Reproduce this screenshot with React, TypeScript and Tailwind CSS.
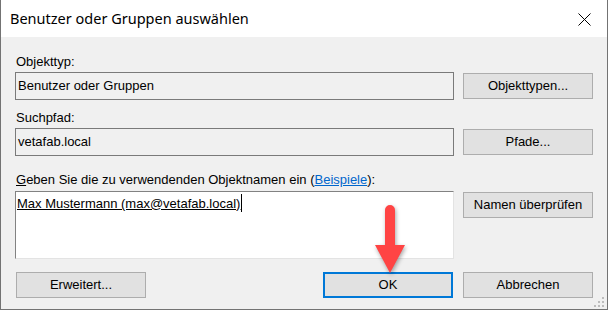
import React from 'react';

// Windows-Dialog "Benutzer oder Gruppen auswählen" mit rotem Hinweispfeil auf OK.
function WinButton({ children, primary = false }: { children: React.ReactNode; primary?: boolean }) {
  return (
    <div
      className={
        'flex h-[26px] w-[130px] shrink-0 items-center justify-center bg-[#e1e1e1] text-[13px] text-black ' +
        (primary ? 'border-2 border-[#0078d7]' : 'border border-[#adadad]')
      }
    >
      {children}
    </div>
  );
}

function Label({ children }: { children: React.ReactNode }) {
  return <div className="h-[15px] pl-px text-[13px] leading-[15px] text-black">{children}</div>;
}

function ReadOnlyBox({ value }: { value: string }) {
  return (
    <div className="flex h-[28px] w-[439px] items-center border border-[#7a7a7a] bg-[#f0f0f0] pl-[2px] text-[13px] text-black">
      {value}
    </div>
  );
}

function Arrow() {
  return (
    <svg
      className="pointer-events-none absolute left-[370px] top-[198px] drop-shadow-[1px_2px_2px_rgba(0,0,0,0.35)]"
      width="38"
      height="78"
      viewBox="0 0 38 78"
    >
      <path
        d="M14 12 a5 5 0 0 1 10 0 V47 H34 L19 75 L4 47 H14 Z"
        fill="#ff4444"
      />
    </svg>
  );
}

function ResizeGrip() {
  const dots = [
    [8, 0],
    [4, 4],
    [8, 4],
    [0, 8],
    [4, 8],
    [8, 8],
  ];
  return (
    <div className="absolute bottom-[2px] right-[3px] h-[10px] w-[10px]">
      {dots.map(([x, y]) => (
        <span
          key={`${x}-${y}`}
          className="absolute h-[2px] w-[2px] bg-[#bcbcbc]"
          style={{ left: x, top: y }}
        />
      ))}
    </div>
  );
}

export default function App() {
  return (
    <div className="h-[310px] w-[609px] bg-white" style={{ fontFamily: '"Liberation Sans", Arial, sans-serif' }}>
      <div className="relative flex h-[310px] w-[608px] flex-col border-x border-b border-[#737373]">
        {/* Titelleiste */}
        <div className="flex h-[37px] shrink-0 items-center justify-between bg-white pl-[9px] pr-[16px]">
          <span className="text-[14.5px] text-black" style={{ fontFamily: '"Noto Sans", "Liberation Sans", sans-serif' }}>
            Benutzer oder Gruppen auswählen
          </span>
          <svg width="13" height="13" viewBox="0 0 13 13" className="mt-[1px]">
            <path d="M0.5 0.5 L12.5 12.5 M12.5 0.5 L0.5 12.5" stroke="#000" strokeWidth="1" />
          </svg>
        </div>

        {/* Inhalt */}
        <div className="flex flex-1 flex-col bg-[#f0f0f0] pl-[14px] pt-[17px]">
          <Label>Objekttyp:</Label>
          <div className="mt-[3px] flex items-start gap-[9px]">
            <ReadOnlyBox value="Benutzer oder Gruppen" />
            <div className="mt-px">
              <WinButton>Objekttypen...</WinButton>
            </div>
          </div>

          <div className="mt-[10px]">
            <Label>Suchpfad:</Label>
          </div>
          <div className="mt-[3px] flex items-start gap-[9px]">
            <ReadOnlyBox value="vetafab.local" />
            <div className="mt-px">
              <WinButton>Pfade...</WinButton>
            </div>
          </div>

          <div className="mt-[16px]">
            <Label>
              <span className="underline">G</span>eben Sie die zu verwendenden Objektnamen ein (
              <span className="text-[#0066cc] underline">Beispiele</span>):
            </Label>
          </div>
          <div className="mt-[4px] flex items-start gap-[9px]">
            <div className="h-[68px] w-[439px] border border-b-[#e3e3e3] border-l-[#828282] border-r-[#e3e3e3] border-t-[#828282] bg-white pl-[1px] pt-[2px]">
              <div className="flex items-center text-[13px] leading-[17px] text-black">
                <span className="underline">Max Mustermann (max@vetafab.local)</span>
                <span className="ml-px inline-block h-[18px] w-px bg-black" />
              </div>
            </div>
            <div className="mt-px">
              <WinButton>Namen überprüfen</WinButton>
            </div>
          </div>

          <div className="mt-[13px] flex items-start">
            <div className="ml-px">
              <WinButton>Erweitert...</WinButton>
            </div>
            <div className="ml-[177px]">
              <WinButton primary>OK</WinButton>
            </div>
            <div className="ml-[10px]">
              <WinButton>Abbrechen</WinButton>
            </div>
          </div>
        </div>

        <Arrow />
        <ResizeGrip />
      </div>
    </div>
  );
}
